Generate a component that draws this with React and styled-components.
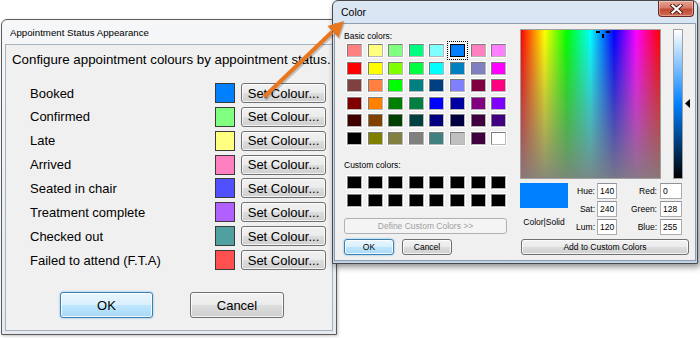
import React from 'react';
import styled, { createGlobalStyle, css } from 'styled-components';

const GlobalStyle = createGlobalStyle`
  html, body { margin: 0; padding: 0; background: #fff; }
  body { font-family: "Liberation Sans", Arial, sans-serif; color: #000; }
  * { box-sizing: border-box; }
`;

const statuses = [
  { label: 'Booked', colour: '#0080ff' },
  { label: 'Confirmed', colour: '#80ff80' },
  { label: 'Late', colour: '#ffff80' },
  { label: 'Arrived', colour: '#ff80c0' },
  { label: 'Seated in chair', colour: '#5050ff' },
  { label: 'Treatment complete', colour: '#b060ff' },
  { label: 'Checked out', colour: '#50a0a0' },
  { label: 'Failed to attend (F.T.A)', colour: '#ff5050' },
];

const basicColours = [
  '#ff8080', '#ffff80', '#80ff80', '#00ff80', '#80ffff', '#0080ff', '#ff80c0', '#ff80ff',
  '#ff0000', '#ffff00', '#80ff00', '#00ff40', '#00ffff', '#0080c0', '#8080c0', '#ff00ff',
  '#804040', '#ff8040', '#00ff00', '#008080', '#004080', '#8080ff', '#800040', '#ff0080',
  '#800000', '#ff8000', '#008000', '#008040', '#0000ff', '#0000a0', '#800080', '#8000ff',
  '#400000', '#804000', '#004000', '#004040', '#000080', '#000040', '#400040', '#400080',
  '#000000', '#808000', '#808040', '#808080', '#408080', '#c0c0c0', '#400040', '#ffffff',
];

const Desktop = styled.div`
  position: relative;
  width: 700px;
  height: 338px;
  overflow: hidden;
  background: #fff;
`;

/* ---------- shared window chrome ---------- */

const buttonBase = css`
  display: flex;
  align-items: center;
  justify-content: center;
  padding: 0;
  font-family: "Liberation Sans", Arial, sans-serif;
  color: #000;
  border: 1px solid #707070;
  border-radius: 3px;
  background: linear-gradient(to bottom, #f2f2f2 0%, #ebebeb 48%, #dddddd 52%, #cfcfcf 100%);
  box-shadow: inset 0 0 0 1px rgba(255, 255, 255, 0.75);
`;

const WinButton = styled.button`
  ${buttonBase};
  width: ${(p) => p.$w}px;
  height: ${(p) => p.$h}px;
  font-size: ${(p) => p.$size || 13}px;
  ${(p) =>
    p.$primary &&
    css`
      border-color: #3c7fb1;
      background: linear-gradient(to bottom, #eaf6fd 0%, #d9f0fc 48%, #bee6fd 52%, #a7d9f5 100%);
      box-shadow: inset 0 0 0 1px rgba(255, 255, 255, 0.8), 0 0 2px #57b2e6;
    `}
  ${(p) =>
    p.$disabled &&
    css`
      color: #a0a0a0;
      border-color: #adb2b5;
      background: #f4f4f4;
      box-shadow: none;
    `}
`;

/* ---------- appointment status window ---------- */

const StatusWindow = styled.div`
  position: absolute;
  left: 1px;
  top: 19px;
  width: 336px;
  height: 316px;
  display: flex;
  flex-direction: column;
  padding: 0 3px 3px;
  border: 1px solid #5b5b5b;
  border-radius: 6px 6px 0 0;
  background: linear-gradient(to bottom, #f5f7f9 0%, #e6e9ed 100%);
  box-shadow: 1px 1px 3px rgba(0, 0, 0, 0.25);
`;

const StatusTitle = styled.div`
  height: 24px;
  display: flex;
  align-items: center;
  padding-left: 5px;
  font-size: 9.7px;
  white-space: nowrap;
`;

const StatusClient = styled.div`
  flex: 1;
  display: flex;
  flex-direction: column;
  padding: 7px 0 0 6px;
  border: 1px solid #a7b2bf;
  background: #f0f0f0;
`;

const Heading = styled.div`
  font-size: 13.3px;
  line-height: 16px;
  white-space: nowrap;
`;

const StatusGrid = styled.div`
  margin-top: 15px;
  padding: 0 6px 0 18px;
  display: grid;
  grid-template-columns: 1fr 20px 85px;
  grid-auto-rows: 20px;
  column-gap: 6px;
  row-gap: 3.86px;
  align-items: center;
`;

const StatusLabel = styled.div`
  font-size: 13px;
  white-space: nowrap;
`;

const StatusSwatch = styled.div`
  width: 20px;
  height: 20px;
  border: 1px solid #3a3a3a;
  background: ${(p) => p.$colour};
`;

const DialogButtons = styled.div`
  display: flex;
  gap: 37px;
  margin-top: 22px;
  padding-left: 48px;
`;

/* ---------- colour picker window ---------- */

const ColorWindow = styled.div`
  position: absolute;
  left: 332px;
  top: 0;
  width: 366px;
  height: 264px;
  display: flex;
  flex-direction: column;
  padding: 0 1px 2px;
  border: 1px solid #4a4a4a;
  border-radius: 6px 6px 0 0;
  background: linear-gradient(to bottom, #dbe7f4 0%, #c9daec 45%, #bed2e8 100%);
  box-shadow: 2px 3px 6px rgba(0, 0, 0, 0.45);
`;

const ColorTitleBar = styled.div`
  height: 22px;
  display: flex;
  justify-content: space-between;
  align-items: flex-start;
`;

const ColorTitleText = styled.div`
  padding-left: 7px;
  line-height: 22px;
  font-size: 10.5px;
`;

const CloseButton = styled.div`
  width: 36px;
  height: 16px;
  margin-right: 2px;
  display: flex;
  align-items: center;
  justify-content: center;
  border: 1px solid #6d2a22;
  border-top: none;
  border-radius: 0 0 4px 4px;
  background: linear-gradient(to bottom, #e8a493 0%, #d57c68 45%, #c24a36 55%, #cf6a50 100%);
  box-shadow: inset 0 0 0 1px rgba(255, 255, 255, 0.35);
`;

const ColorClient = styled.div`
  flex: 1;
  display: flex;
  gap: 13px;
  border: 1px solid #8e9eb0;
  background: #f0f0f0;
`;

const LeftPane = styled.div`
  width: 172px;
  padding: 7px 0 0 9px;
  display: flex;
  flex-direction: column;
`;

const SmallLabel = styled.div`
  font-size: 8.5px;
  line-height: 10px;
  white-space: nowrap;
  margin-top: ${(p) => p.$top || 0}px;
`;

const SwatchGrid = styled.div`
  margin: ${(p) => p.$top}px 0 0 3px;
  display: grid;
  grid-template-columns: repeat(8, 15px);
  grid-auto-rows: 13px;
  column-gap: 5.6px;
  row-gap: 4.6px;
`;

const PickSwatch = styled.div`
  border: 1px solid #7c7c7c;
  border-right-color: #b8b8b8;
  border-bottom-color: #b8b8b8;
  box-shadow: 0 0 0 1px #ffffff;
  background: ${(p) => p.$colour};
  ${(p) =>
    p.$selected &&
    css`
      border: 1px solid #000;
      outline: 1px dotted #000;
      outline-offset: 2px;
    `}
`;

const DefineWrap = styled.div`
  margin-top: 11px;
`;

const PaneButtonRow = styled.div`
  display: flex;
  gap: 8px;
  margin-top: 5px;
`;

const RightPane = styled.div`
  padding-top: 5px;
  display: flex;
  flex-direction: column;
`;

const SpectrumRow = styled.div`
  display: flex;
  align-items: flex-start;
`;

const Spectrum = styled.div`
  position: relative;
  width: 141px;
  height: 150px;
  border: 1px solid #a0a0a0;
  background:
    linear-gradient(to bottom, rgba(128, 128, 128, 0) 0%, rgba(128, 128, 128, 0.92) 100%),
    linear-gradient(to right, #ff0000 0%, #ffff00 17%, #00ff00 33%, #00ffff 50%, #0000ff 67%, #ff00ff 83%, #ff0000 100%);
`;

const Crosshair = styled.svg`
  position: absolute;
  left: 74px;
  top: 0;
`;

const LumBar = styled.div`
  width: 10px;
  height: 150px;
  margin-left: 12px;
  border: 1px solid #a0a0a0;
  background: linear-gradient(to bottom, #ffffff 0%, #0080ff 50%, #000000 100%);
`;

const LumMarker = styled.svg`
  margin: 70px 0 0 2px;
`;

const LowerRow = styled.div`
  display: flex;
  margin-top: 4px;
`;

const SolidBlock = styled.div`
  width: 48px;
  display: flex;
  flex-direction: column;
  align-items: center;
`;

const SolidSwatch = styled.div`
  width: 48px;
  height: 25px;
  background: ${(p) => p.$colour};
`;

const FieldGrid = styled.div`
  display: grid;
  grid-template-columns: 29px 20px 43px 22px;
  grid-auto-rows: 16px;
  row-gap: 2px;
`;

const FieldLabel = styled.div`
  font-size: 8.5px;
  display: flex;
  align-items: center;
  justify-content: flex-end;
  padding-right: ${(p) => p.$gap}px;
  white-space: nowrap;
`;

const FieldBox = styled.div`
  font-size: 8.5px;
  display: flex;
  align-items: center;
  padding-left: 2px;
  background: #fff;
  border: 1px solid #abadb3;
  border-top-color: #8f9399;
`;

const AddButtonWrap = styled.div`
  margin: 4px 0 0 1px;
`;

const ArrowOverlay = styled.svg`
  position: absolute;
  left: 0;
  top: 0;
  pointer-events: none;
`;

const fields = [
  ['Hue:', '140', 'Red:', '0'],
  ['Sat:', '240', 'Green:', '128'],
  ['Lum:', '120', 'Blue:', '255'],
];

export default function App() {
  return (
    <Desktop>
      <GlobalStyle />

      <StatusWindow>
        <StatusTitle>Appointment Status Appearance</StatusTitle>
        <StatusClient>
          <Heading>Configure appointment colours by appointment status.</Heading>
          <StatusGrid>
            {statuses.map((s) => (
              <React.Fragment key={s.label}>
                <StatusLabel>{s.label}</StatusLabel>
                <StatusSwatch $colour={s.colour} />
                <WinButton $w={85} $h={20}>Set Colour...</WinButton>
              </React.Fragment>
            ))}
          </StatusGrid>
          <DialogButtons>
            <WinButton $w={93} $h={26} $primary>OK</WinButton>
            <WinButton $w={94} $h={26}>Cancel</WinButton>
          </DialogButtons>
        </StatusClient>
      </StatusWindow>

      <ColorWindow>
        <ColorTitleBar>
          <ColorTitleText>Color</ColorTitleText>
          <CloseButton>
            <svg width="13" height="10" viewBox="0 0 13 10">
              <path d="M2.5 1.5 L10.5 8.5 M10.5 1.5 L2.5 8.5" stroke="#4a1810" strokeWidth="4" strokeLinecap="square" />
              <path d="M2.5 1.5 L10.5 8.5 M10.5 1.5 L2.5 8.5" stroke="#fff" strokeWidth="2.2" strokeLinecap="square" />
            </svg>
          </CloseButton>
        </ColorTitleBar>
        <ColorClient>
          <LeftPane>
            <SmallLabel>Basic colors:</SmallLabel>
            <SwatchGrid $top={3}>
              {basicColours.map((c, i) => (
                <PickSwatch key={i} $colour={c} $selected={i === 5} />
              ))}
            </SwatchGrid>
            <SmallLabel $top={15}>Custom colors:</SmallLabel>
            <SwatchGrid $top={6}>
              {Array.from({ length: 16 }).map((_, i) => (
                <PickSwatch key={i} $colour="#000" />
              ))}
            </SwatchGrid>
            <DefineWrap>
              <WinButton $w={163} $h={16} $size={8.5} $disabled>Define Custom Colors &gt;&gt;</WinButton>
            </DefineWrap>
            <PaneButtonRow>
              <WinButton $w={50} $h={16} $size={8.5} $primary>OK</WinButton>
              <WinButton $w={50} $h={16} $size={8.5}>Cancel</WinButton>
            </PaneButtonRow>
          </LeftPane>

          <RightPane>
            <SpectrumRow>
              <Spectrum>
                <Crosshair width="16" height="9" viewBox="0 0 16 9">
                  <rect x="1" y="1" width="4" height="2" fill="#000" />
                  <rect x="11" y="1" width="4" height="2" fill="#000" />
                  <rect x="7" y="4" width="2" height="4" fill="#000" />
                </Crosshair>
              </Spectrum>
              <LumBar />
              <LumMarker width="6" height="9" viewBox="0 0 6 9">
                <path d="M0 4.5 L5 0 L5 9 Z" fill="#000" />
              </LumMarker>
            </SpectrumRow>
            <LowerRow>
              <SolidBlock>
                <SolidSwatch $colour="#0080ff" />
                <SmallLabel $top={9}>Color|Solid</SmallLabel>
              </SolidBlock>
              <FieldGrid>
                {fields.map(([l1, v1, l2, v2]) => (
                  <React.Fragment key={l1}>
                    <FieldLabel $gap={2}>{l1}</FieldLabel>
                    <FieldBox>{v1}</FieldBox>
                    <FieldLabel $gap={3}>{l2}</FieldLabel>
                    <FieldBox>{v2}</FieldBox>
                  </React.Fragment>
                ))}
              </FieldGrid>
            </LowerRow>
            <AddButtonWrap>
              <WinButton $w={168} $h={16} $size={8.5}>Add to Custom Colors</WinButton>
            </AddButtonWrap>
          </RightPane>
        </ColorClient>
      </ColorWindow>

      <ArrowOverlay width="700" height="338" viewBox="0 0 700 338">
        <line x1="264" y1="97" x2="332" y2="32" stroke="rgba(0,0,0,0.2)" strokeWidth="4" transform="translate(1 2)" />
        <polygon points="344,21 338.5,37.5 327.5,26" fill="rgba(0,0,0,0.2)" transform="translate(1 2)" />
        <line x1="264" y1="97" x2="332" y2="32" stroke="#e8771f" strokeWidth="4" />
        <polygon points="344,21 338.5,37.5 327.5,26" fill="#e8771f" />
      </ArrowOverlay>
    </Desktop>
  );
}
